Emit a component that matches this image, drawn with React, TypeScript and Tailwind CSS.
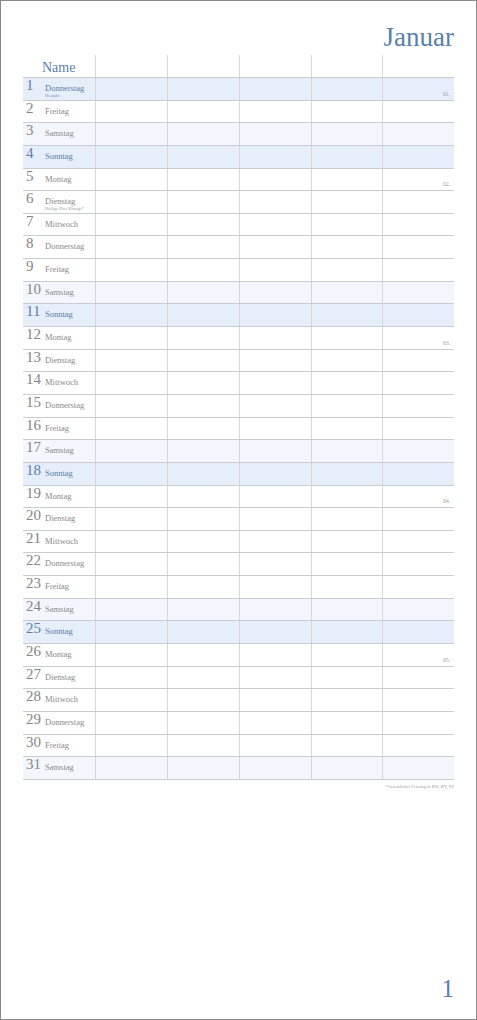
const serif = "font-['Liberation_Serif','DejaVu_Serif',serif]";

type Day = { n: number; name: string; note?: string; kind: "work" | "sat" | "sun" };

const names = ["Donnerstag", "Freitag", "Samstag", "Sonntag", "Montag", "Dienstag", "Mittwoch"];

const notes: Record<number, string> = { 1: "Neujahr", 6: "Heilige Drei Könige*" };
const weeks: Record<number, string> = { 1: "01.", 5: "02.", 12: "03.", 19: "04.", 26: "05." };

const days: Day[] = Array.from({ length: 31 }, (_, i) => {
  const name = names[i % 7];
  const n = i + 1;
  let kind: Day["kind"] = "work";
  if (name === "Samstag") kind = "sat";
  if (name === "Sonntag" || n === 1) kind = "sun";
  return { n, name, note: notes[n], kind };
});

const cols = "grid grid-cols-[73px_72px_72px_72px_71px_71px]";

export default function App() {
  return (
    <div className={`${serif} flex h-[1020px] w-[477px] flex-col border border-[#8a8a8a] bg-white`}>
      {/* Month title */}
      <div className="h-[54px] pr-[22px] pt-[23px] text-right">
        <span className="text-[27px] leading-[27px] text-[#5a80ab]">Januar</span>
      </div>

      <div className="ml-[22px] w-[431px]">
        {/* Header row */}
        <div className={`${cols} h-[23px] border-b border-[#c9cdd2]`}>
          <div className="border-r border-[#d6d6d6] pl-[19px] pt-[6px] text-[14px] leading-[14px] text-[#5a80ab]">
            Name
          </div>
          <div className="border-r border-[#d6d6d6]" />
          <div className="border-r border-[#d6d6d6]" />
          <div className="border-r border-[#d6d6d6]" />
          <div className="border-r border-[#d6d6d6]" />
          <div />
        </div>

        {days.map((d) => {
          const bg = d.kind === "sun" ? "bg-[#e6eef9]" : d.kind === "sat" ? "bg-[#f3f7fd]" : "bg-white";
          const blue = d.kind === "sun";
          return (
            <div key={d.n} className={`${cols} ${bg} h-[22.65px] border-b border-[#c9cdd2]`}>
              <div className="flex border-r border-[#d6d6d6]">
                <span
                  className={`w-[22px] shrink-0 pl-[3px] text-[15px] leading-[15px] ${
                    blue ? "text-[#5a80ab]" : "text-[#858585]"
                  }`}
                >
                  {d.n}
                </span>
                <div className="pt-[6px]">
                  <p className={`text-[8.5px] leading-[9px] ${blue ? "text-[#5a80ab]" : "text-[#8a8a8a]"}`}>
                    {d.name}
                  </p>
                  {d.note && (
                    <p className={`text-[4.5px] leading-[5px] ${blue ? "text-[#7a98bb]" : "text-[#999]"}`}>
                      {d.note}
                    </p>
                  )}
                </div>
              </div>
              <div className="border-r border-[#d6d6d6]" />
              <div className="border-r border-[#d6d6d6]" />
              <div className="border-r border-[#d6d6d6]" />
              <div className="border-r border-[#d6d6d6]" />
              <div className="flex items-end justify-end pb-[3px] pr-[4px] text-[5.5px] leading-[6px] text-[#9a9a9a]">
                {weeks[d.n]}
              </div>
            </div>
          );
        })}

        <p className="pt-[4px] text-right text-[4.5px] leading-[5px] text-[#999]">
          *Gesetzlicher Feiertag in BW, BY, ST
        </p>
      </div>

      {/* Page number */}
      <div className="mt-auto pb-[18px] pr-[22px] text-right text-[25px] leading-[25px] text-[#5a80ab]">1</div>
    </div>
  );
}
